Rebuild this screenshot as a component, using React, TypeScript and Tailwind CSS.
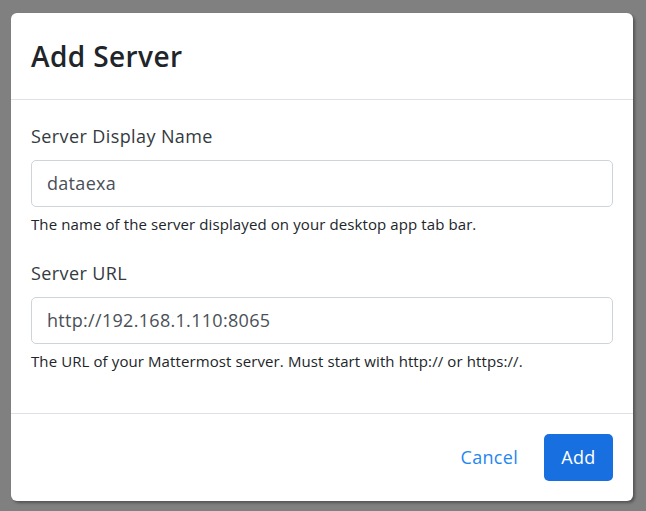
import React from 'react';

const Field: React.FC<{ label: string; value: string; help: string }> = ({ label, value, help }) => (
  <div>
    <label className="block text-[18px] leading-[27px] tracking-[0.4px] text-[#333a40]">{label}</label>
    <div className="mt-[10px] h-[47px] rounded-[5px] border border-[#ced4da] px-[15px] flex items-center text-[18px] tracking-[0.3px] text-[#495057]">
      {value}
    </div>
    <p className="mt-[7px] text-[15px] leading-[21px] tracking-[0.1px] text-[#212529]">{help}</p>
  </div>
);

export default function App() {
  return (
    <div
      className="w-[646px] h-[511px] bg-[#808080] pt-[13px] pl-[11px]"
      style={{ fontFamily: '"Open Sans", "Noto Sans", sans-serif' }}
    >
      <div className="w-[622px] h-[488px] bg-white rounded-[6px] shadow-[2px_2px_3px_rgba(0,0,0,0.35)] flex flex-col">
        {/* Header */}
        <div className="h-[87px] px-[20px] flex items-center border-b border-[#dee2e6]">
          <h1 className="text-[28px] font-semibold tracking-[0.4px] text-[#212529]">Add Server</h1>
        </div>

        {/* Body */}
        <div className="flex-1 px-[20px] pt-[23px] flex flex-col gap-[25px]">
          <Field
            label="Server Display Name"
            value="dataexa"
            help="The name of the server displayed on your desktop app tab bar."
          />
          <Field
            label="Server URL"
            value="http://192.168.1.110:8065"
            help="The URL of your Mattermost server. Must start with http:// or https://."
          />
        </div>

        {/* Footer */}
        <div className="h-[88px] px-[20px] border-t border-[#dee2e6] flex items-center justify-end gap-[14px]">
          <button className="h-[47px] px-[12px] text-[18px] tracking-[0.3px] text-[#1f87f0]">Cancel</button>
          <button className="h-[47px] w-[69px] rounded-[5px] bg-[#186fe0] text-[18px] tracking-[0.3px] text-white">Add</button>
        </div>
      </div>
    </div>
  );
}
